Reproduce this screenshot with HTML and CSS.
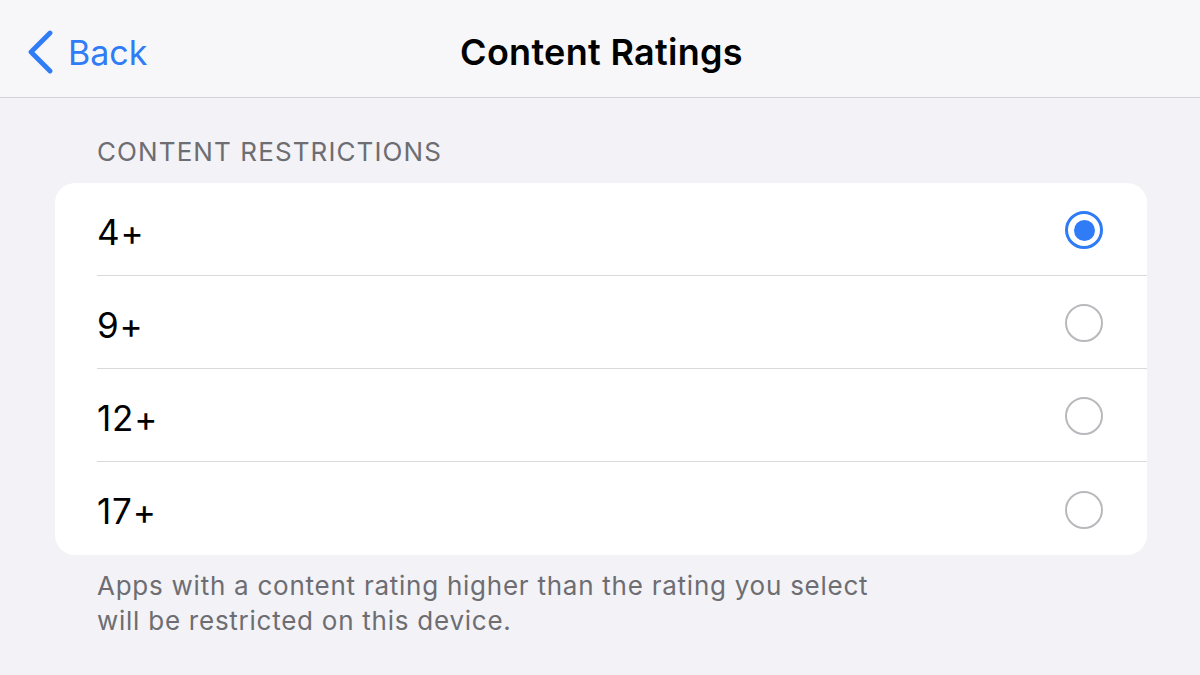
FILE: index.html
```html
<!DOCTYPE html>
<html lang="en">
<head>
    <meta charset="UTF-8">
    <meta name="viewport" content="width=device-width, initial-scale=1.0">
    <title>Content Ratings</title>
    <link rel="stylesheet" href="styles.css">
</head>
<body>

    <div class="nav-bar">
        <a class="back" href="#">
            <svg class="chevron" width="28" height="44" viewBox="0 0 28 44">
                <path d="M24 3 L5 22 L24 41" fill="none" stroke="#2f7cf6" stroke-width="4.8" stroke-linecap="round" stroke-linejoin="round"/>
            </svg>
            <span>Back</span>
        </a>
        <h1>Content Ratings</h1>
        <div></div>
    </div>

    <div class="section">
        <div class="section-title">CONTENT RESTRICTIONS</div>
        <div class="card">
            <div class="row">
                <span class="label">4+</span>
                <span class="radio selected"></span>
            </div>
            <div class="row">
                <span class="label">9+</span>
                <span class="radio"></span>
            </div>
            <div class="row">
                <span class="label">12+</span>
                <span class="radio"></span>
            </div>
            <div class="row">
                <span class="label">17+</span>
                <span class="radio"></span>
            </div>
        </div>
        <p class="section-footer">Apps with a content rating higher than the rating you select<br>will be restricted on this device.</p>
    </div>

</body>
</html>
```

FILE: styles.css
```css
body {
    font-family: Inter, "Noto Sans", sans-serif;
    background-color: #f2f2f7;
    margin: 0;
    padding: 0;
    color: #000;
}

.nav-bar {
    height: 98px;
    box-sizing: border-box;
    padding-top: 7px;
    display: grid;
    grid-template-columns: 1fr auto 1fr;
    align-items: center;
    background-color: #f7f7f9;
    border-bottom: 1px solid #d4d4d8;
}

.back {
    display: flex;
    align-items: center;
    gap: 14px;
    padding-left: 26px;
    color: #2f7cf6;
    text-decoration: none;
    font-size: 34px;
    letter-spacing: 0;
}

.back span {
    margin-top: 1px;
}

.nav-bar h1 {
    margin: 0 0 0 3px;
    font-size: 36px;
    font-weight: 600;
    letter-spacing: 0.3px;
}

.section {
    padding: 37px 53px 0 55px;
}

.section-title {
    padding-left: 42px;
    font-size: 26px;
    color: #6d6d72;
    letter-spacing: 1.1px;
    line-height: 34px;
    margin-bottom: 14px;
}

.card {
    background-color: #fff;
    border-radius: 20px;
    overflow: hidden;
}

.row {
    height: 93px;
    margin-left: 42px;
    padding-right: 44px;
    display: flex;
    align-items: center;
    justify-content: space-between;
    border-bottom: 1px solid #d9d9dc;
    box-sizing: border-box;
}

.row:last-child {
    border-bottom: none;
}

.label {
    font-size: 35px;
    letter-spacing: 0.8px;
    margin-top: 5px;
}

.radio {
    width: 38px;
    height: 38px;
    border: 2.5px solid #b9b9bd;
    border-radius: 50%;
    box-sizing: border-box;
    display: flex;
    align-items: center;
    justify-content: center;
    margin-top: 2px;
}

.radio.selected {
    border: 3.5px solid #2f7cf6;
}

.radio.selected::after {
    content: "";
    width: 21px;
    height: 21px;
    border-radius: 50%;
    background-color: #2f7cf6;
}

.section-footer {
    margin: 13px 0 0 42px;
    font-size: 26px;
    line-height: 35px;
    color: #6d6d72;
    letter-spacing: 0.75px;
}
```
